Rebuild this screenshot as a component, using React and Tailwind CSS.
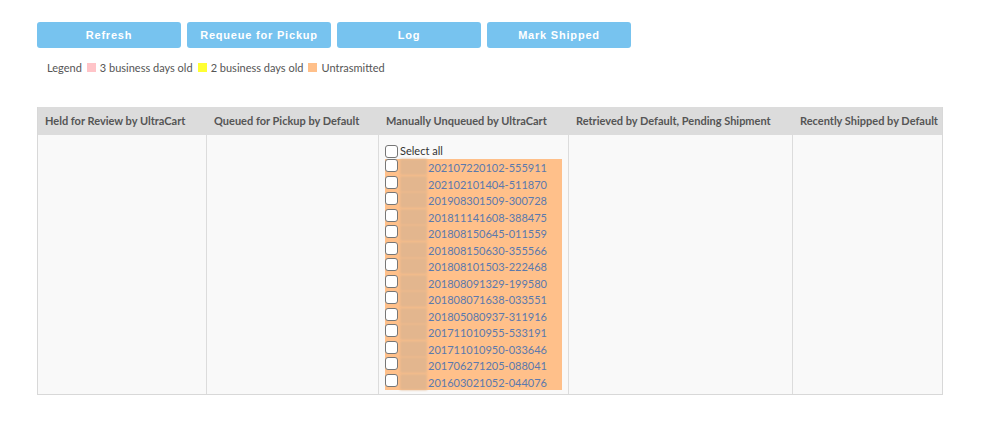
import React from 'react';

const orders = [
	'202107220102-555911',
	'202102101404-511870',
	'201908301509-300728',
	'201811141608-388475',
	'201808150645-011559',
	'201808150630-355566',
	'201808101503-222468',
	'201808091329-199580',
	'201808071638-033551',
	'201805080937-311916',
	'201711010955-533191',
	'201711010950-033646',
	'201706271205-088041',
	'201603021052-044076',
];

const columns = [
	{ title: 'Held for Review by UltraCart', width: 'w-[169px]' },
	{ title: 'Queued for Pickup by Default', width: 'w-[172px]' },
	{ title: 'Manually Unqueued by UltraCart', width: 'w-[190px]' },
	{ title: 'Retrieved by Default, Pending Shipment', width: 'w-[224px]' },
	{ title: 'Recently Shipped by Default', width: 'w-[149px]' },
];

const Checkbox = () => (
	<span className="w-[13px] h-[13px] shrink-0 rounded-[3px] border border-[#767676] bg-white" />
);

const App = () => {
	return (
		<div className="w-[1007px] h-[439px] bg-white font-['Lato',sans-serif] text-[#444]">
			{/* buttons */}
			<div className="flex gap-[6px] pl-[37px] pt-[22px]">
				{['Refresh', 'Requeue for Pickup', 'Log', 'Mark Shipped'].map((b) => (
					<button
						key={b}
						className="w-[144px] h-[26px] rounded-[3px] bg-[#77c3ef] text-white text-[11px] font-bold tracking-[0.8px] font-['Liberation_Sans',sans-serif]"
					>
						{b}
					</button>
				))}
			</div>

			{/* legend */}
			<div className="flex items-center pl-[47px] mt-[14px] text-[11px] text-[#555] leading-none">
				<span>Legend</span>
				<span className="w-[9px] h-[9px] bg-[#ffc4c8] ml-[5px] mr-[4px]" />
				<span>3 business days old</span>
				<span className="w-[9px] h-[9px] bg-[#ffff33] ml-[5px] mr-[4px]" />
				<span>2 business days old</span>
				<span className="w-[9px] h-[9px] bg-[#ffc08a] ml-[5px] mr-[4px]" />
				<span>Untrasmitted</span>
			</div>

			{/* table */}
			<div className="ml-[37px] mt-[34px] w-[906px] border border-[#d8d8d8] border-t-0">
				<div className="flex h-[28px] bg-[#dcdcdc]">
					{columns.map((c) => (
						<div
							key={c.title}
							className={`${c.width} flex items-center px-[7px] text-[11px] font-bold text-[#555] whitespace-nowrap`}
						>
							{c.title}
						</div>
					))}
				</div>
				<div className="flex h-[259px] bg-[#f9f9f9]">
					<div className="w-[169px] border-r border-[#dcdcdc]" />
					<div className="w-[172px] border-r border-[#dcdcdc]" />
					<div className="w-[190px] border-r border-[#dcdcdc] pl-[6px] pt-[9px]">
						<div className="flex items-center gap-[2px] h-[15px]">
							<Checkbox />
							<span className="text-[11px] text-[#333]">Select all</span>
						</div>
						<div className="w-[177px] bg-[#ffc08a]">
							{orders.map((o) => (
								<div key={o} className="flex items-start h-[16.5px]">
									<Checkbox />
									<span className="w-[27px] h-[16px] ml-[2px] bg-[#e3b68e] blur-[1px]" />
									<a className="pl-[1px] text-[11px] leading-[17px] text-[#5b79ad]">
										{o}
									</a>
								</div>
							))}
						</div>
					</div>
					<div className="w-[224px] border-r border-[#dcdcdc]" />
					<div className="w-[149px]" />
				</div>
			</div>
		</div>
	);
};

export default App;
